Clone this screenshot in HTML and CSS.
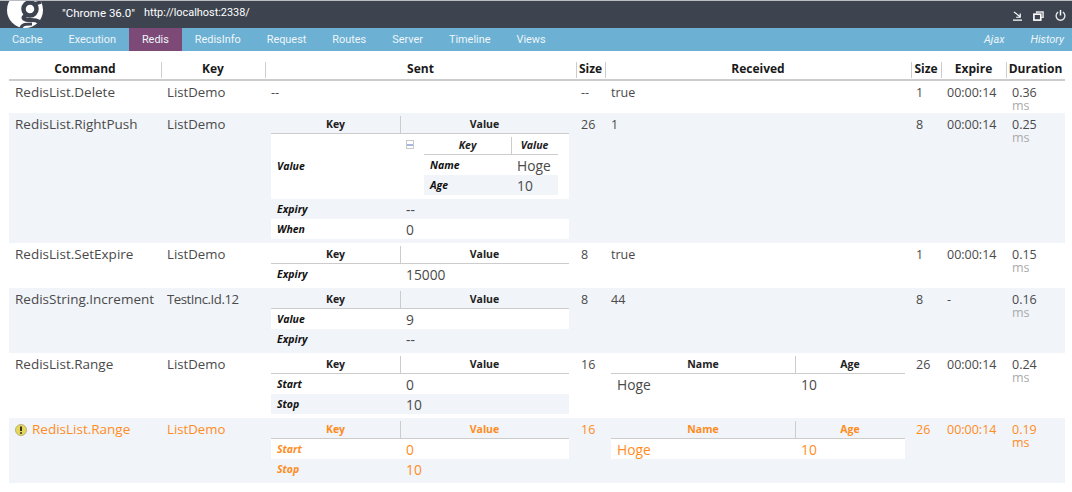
FILE: index.html
```html
<!DOCTYPE html>
<html lang="en">
<head>
<meta charset="utf-8">
<title>Glimpse</title>
<link rel="stylesheet" href="styles.css">
</head>
<body>
<header class="topbar">
  <svg class="logo" width="48" height="27" viewBox="0 0 48 27" aria-hidden="true">
    <circle cx="25" cy="9" r="18" fill="#fff"/>
    <ellipse cx="30" cy="8" rx="6.5" ry="6.5" fill="none" stroke="#3d4450" stroke-width="4.5"/>
    <path d="M34 3 L41 1" fill="none" stroke="#3d4450" stroke-width="3.5"/>
    <path d="M26 14 C21 17 24 19 31 19 C38 19 42 21 41 27" fill="none" stroke="#3d4450" stroke-width="4"/>
    <path d="M21 27 C22 23 26 23 32 23" fill="none" stroke="#3d4450" stroke-width="3"/>
  </svg>
  <span class="client">"Chrome 36.0"</span>
  <span class="url">http://localhost:2338/</span>
  <div class="actions">
    <svg width="9" height="10" viewBox="0 0 10 12" preserveAspectRatio="none" aria-hidden="true"><path d="M1 1 L8 7 M8 3 V7.5 H3.5 M0 11 H10" fill="none" stroke="#fff" stroke-width="1.4"/></svg>
    <svg width="11" height="10" viewBox="0 0 12 11" preserveAspectRatio="none" aria-hidden="true"><path d="M4 2.5 V1 H11 V7 H9" fill="none" stroke="#e8e8e8" stroke-width="1.6"/><rect x="1" y="3.5" width="7.5" height="6.5" fill="none" stroke="#fff" stroke-width="1.8"/></svg>
    <svg width="11" height="11" viewBox="0 0 12 12" aria-hidden="true"><path d="M3.4 2.4 A4.8 4.8 0 1 0 8.6 2.4" fill="none" stroke="#e8e8e8" stroke-width="1.5"/><path d="M6 0 V6" fill="none" stroke="#fff" stroke-width="1.6"/></svg>
  </div>
</header>
<nav class="tabs">
  <a class="tab">Cache</a>
  <a class="tab">Execution</a>
  <a class="tab active">Redis</a>
  <a class="tab">RedisInfo</a>
  <a class="tab">Request</a>
  <a class="tab">Routes</a>
  <a class="tab">Server</a>
  <a class="tab">Timeline</a>
  <a class="tab">Views</a>
  <a class="tab side first">Ajax</a>
  <a class="tab side">History</a>
</nav>
<main class="panel">
<table class="main">
  <colgroup><col class="c1"><col class="c2"><col class="c3"><col class="c4"><col class="c5"><col class="c6"><col class="c7"><col class="c8"></colgroup>
  <thead>
    <tr><th>Command</th><th>Key</th><th>Sent</th><th>Size</th><th>Received</th><th>Size</th><th>Expire</th><th>Duration</th></tr>
  </thead>
  <tbody>
    <tr>
      <td>RedisList.Delete</td><td>ListDemo</td><td class="dash">--</td><td>--</td><td>true</td><td>1</td><td>00:00:14</td><td>0.36<span class="ms">ms</span></td>
    </tr>
    <tr class="alt">
      <td>RedisList.RightPush</td><td>ListDemo</td>
      <td class="nest">
        <table class="sub">
          <colgroup><col class="kc"><col></colgroup>
          <thead><tr><th>Key</th><th>Value</th></tr></thead>
          <tbody>
            <tr class="w"><th class="mid">Value</th><td class="deep">
              <div class="deepwrap">
                <span class="minus"></span>
                <table class="sub inner">
                  <colgroup><col class="ik"><col></colgroup>
                  <thead><tr><th>Key</th><th>Value</th></tr></thead>
                  <tbody>
                    <tr class="w"><th>Name</th><td>Hoge</td></tr>
                    <tr class="a"><th>Age</th><td>10</td></tr>
                  </tbody>
                </table>
              </div>
            </td></tr>
            <tr class="a"><th>Expiry</th><td>--</td></tr>
            <tr class="w"><th>When</th><td>0</td></tr>
          </tbody>
        </table>
      </td>
      <td>26</td><td>1</td><td>8</td><td>00:00:14</td><td>0.25<span class="ms">ms</span></td>
    </tr>
    <tr>
      <td>RedisList.SetExpire</td><td>ListDemo</td>
      <td class="nest">
        <table class="sub">
          <colgroup><col class="kc"><col></colgroup>
          <thead><tr><th>Key</th><th>Value</th></tr></thead>
          <tbody><tr class="w"><th>Expiry</th><td>15000</td></tr></tbody>
        </table>
      </td>
      <td>8</td><td>true</td><td>1</td><td>00:00:14</td><td>0.15<span class="ms">ms</span></td>
    </tr>
    <tr class="alt">
      <td>RedisString.Increment</td><td class="tight">TestInc.Id.12</td>
      <td class="nest">
        <table class="sub">
          <colgroup><col class="kc"><col></colgroup>
          <thead><tr><th>Key</th><th>Value</th></tr></thead>
          <tbody>
            <tr class="w"><th>Value</th><td>9</td></tr>
            <tr class="a"><th>Expiry</th><td>--</td></tr>
          </tbody>
        </table>
      </td>
      <td>8</td><td>44</td><td>8</td><td>-</td><td>0.16<span class="ms">ms</span></td>
    </tr>
    <tr>
      <td>RedisList.Range</td><td>ListDemo</td>
      <td class="nest">
        <table class="sub">
          <colgroup><col class="kc"><col></colgroup>
          <thead><tr><th>Key</th><th>Value</th></tr></thead>
          <tbody>
            <tr class="w"><th>Start</th><td>0</td></tr>
            <tr class="a"><th>Stop</th><td>10</td></tr>
          </tbody>
        </table>
      </td>
      <td>16</td>
      <td class="nest">
        <table class="sub recv">
          <colgroup><col class="nc"><col></colgroup>
          <thead><tr><th>Name</th><th>Age</th></tr></thead>
          <tbody><tr class="w"><td>Hoge</td><td>10</td></tr></tbody>
        </table>
      </td>
      <td>26</td><td>00:00:14</td><td>0.24<span class="ms">ms</span></td>
    </tr>
    <tr class="alt warn">
      <td><svg class="warnicon" width="12" height="12" viewBox="0 0 12 12" aria-hidden="true"><circle cx="6" cy="6" r="5.5" fill="#e6d75a" stroke="#b9b27a"/><path d="M6 2.5 V7 M6 8.2 V9.8" stroke="#222" stroke-width="1.8" fill="none"/></svg>RedisList.Range</td><td>ListDemo</td>
      <td class="nest">
        <table class="sub">
          <colgroup><col class="kc"><col></colgroup>
          <thead><tr><th>Key</th><th>Value</th></tr></thead>
          <tbody>
            <tr class="w"><th>Start</th><td>0</td></tr>
            <tr class="a"><th>Stop</th><td>10</td></tr>
          </tbody>
        </table>
      </td>
      <td>16</td>
      <td class="nest">
        <table class="sub recv">
          <colgroup><col class="nc"><col></colgroup>
          <thead><tr><th>Name</th><th>Age</th></tr></thead>
          <tbody><tr class="w"><td>Hoge</td><td>10</td></tr></tbody>
        </table>
      </td>
      <td>26</td><td>00:00:14</td><td>0.19<span class="ms">ms</span></td>
    </tr>
  </tbody>
</table>
</main>
</body>
</html>
```
FILE: styles.css
```css
* { box-sizing: border-box; }
html, body { margin: 0; padding: 0; background: #fff; }
body { font-family: "Open Sans", "Noto Sans", sans-serif; font-size: 12.5px; color: #4a4a4a; overflow: hidden; }

.topbar { display: flex; align-items: flex-start; height: 28px; background: #3d4450; border-top: 1px solid #b9bcc0; color: #fff; font-family: Roboto, sans-serif; font-size: 11.5px; overflow: hidden; }
.logo { flex: none; display: block; }
.client { margin-left: 14px; margin-top: 4px; line-height: 16px; }
.url { margin-left: 9px; margin-top: 4px; line-height: 16px; font-size: 10.9px; }
.actions { margin-left: auto; display: flex; gap: 11px; padding: 9px 6px 0 0; align-items: center; }
.actions svg { display: block; }

.tabs { display: flex; height: 23px; background: #6cb0d3; color: #eef6fa; font-family: Roboto, sans-serif; font-size: 10.9px; line-height: 23px; }
.tab { padding: 0 13px; }
.tab:first-child { padding-left: 12px; }
.tab.active { background: #7d4a78; }
.tab.side { font-style: italic; }
.tab.first { margin-left: auto; }
.tab:last-child { padding-right: 8px; }

.panel { padding: 9px 7px 0 9px; }
.main { width: 1056px; table-layout: fixed; border-collapse: separate; border-spacing: 0; }
.c1 { width: 152px; } .c2 { width: 104px; } .c3 { width: 311px; } .c4 { width: 29px; }
.c5 { width: 306px; } .c6 { width: 30px; } .c7 { width: 65px; } .c8 { width: 59px; }

.main > thead > tr > th { height: 21px; padding: 1px 0 0; font-size: 12px; font-weight: 700; color: #1a1a1a; border-bottom: 2px solid #ccc; position: relative; text-align: center; line-height: 16px; vertical-align: top; white-space: nowrap; }
.main > thead > tr > th + th::before { content: ""; position: absolute; left: 0; top: 2px; bottom: 1px; width: 1px; background: #ccc; }

.main > tbody > tr > td { padding: 5px 6px 1px; line-height: 14px; vertical-align: top; white-space: nowrap; overflow: hidden; }
.main > tbody > tr > td:nth-child(1) { padding-top: 4px; font-size: 13.5px; }
.main > tbody > tr > td:nth-child(2) { padding-top: 4px; font-size: 13.2px; }
.main > tbody > tr > td.tight { letter-spacing: -0.45px; }
.main > tbody > tr > td.nest { padding: 1px 6px 4px; }
.main > tbody > tr > td:nth-child(3).nest { padding-right: 7px; }
.main > tbody > tr > td:nth-child(4), .main > tbody > tr > td:nth-child(6) { padding-left: 5px; }
.alt { background: #f1f4f9; }
.ms { display: block; line-height: 12px; color: #aaa; }

.sub { width: 100%; table-layout: fixed; border-collapse: separate; border-spacing: 0; }
.kc { width: 129px; }
.nc { width: 184px; }
.ik { width: 87px; }
.sub > thead > tr > th { height: 20px; padding: 1px 0 0; font-size: 10.5px; font-weight: 700; color: #222; text-align: center; line-height: 18px; border-bottom: 1px solid #ccc; position: relative; vertical-align: top; }
.sub > thead > tr > th + th::before { content: ""; position: absolute; left: 0; top: 2px; bottom: 0; width: 1px; background: #ccc; }
.sub > tbody > tr > th { height: 20px; padding: 0 6px; font-size: 10.5px; font-weight: 700; font-style: italic; color: #111; text-align: left; line-height: 16px; vertical-align: middle; }
.sub > tbody > tr > th.mid { padding-bottom: 2px; }
.sub > tbody > tr > td { height: 20px; padding: 2px 6px 0; font-size: 13.8px; line-height: 18px; vertical-align: middle; }
.w { background: #fff; }
.a { background: #f1f4f9; }
.sub > tbody > tr > td.deep { padding: 1px 11px 4px 6px; }
.deepwrap { display: flex; align-items: flex-start; gap: 10px; }
.minus { flex: none; width: 8px; height: 9px; margin-top: 5px; border: 1px solid #c8c8c8; background: linear-gradient(#fff 3px, #a9b8e0 3px, #a9b8e0 5px, #fff 5px); }
.inner { width: 134px; }
.inner > thead > tr > th { font-style: italic; }

.warn, .warn .ms { color: #ff8c1e; }
.warn th, .main > tbody > tr.warn th { color: #ff8c1e; }
.warnicon { vertical-align: -2px; margin-right: 5px; }
```
